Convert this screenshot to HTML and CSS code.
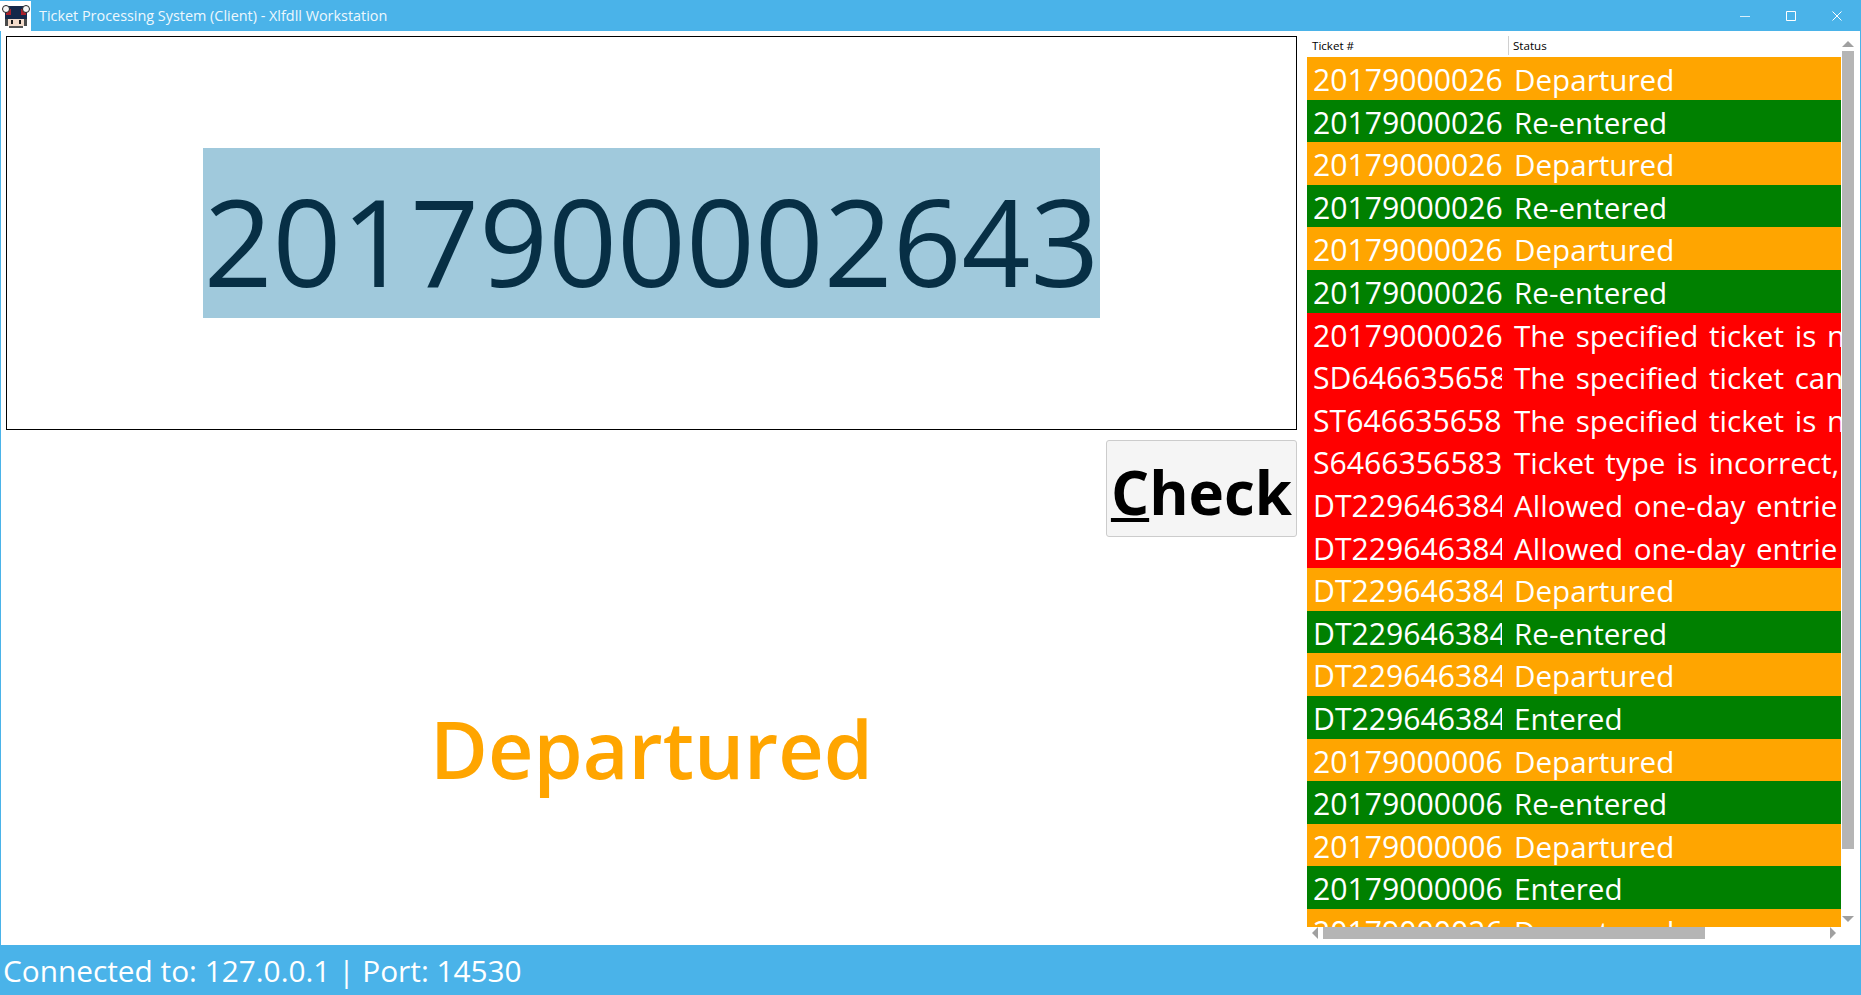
FILE: index.html
```html
<!DOCTYPE html>
<html lang="en">
<head>
    <meta charset="UTF-8">
    <title>Ticket Processing System (Client) - Xlfdll Workstation</title>
    <link rel="stylesheet" href="styles.css">
</head>
<body>
<div class="window">
    <header class="titlebar">
        <div class="app-icon">
            <svg width="30" height="30" viewBox="0 0 30 30">
                <rect x="7" y="5" width="16" height="13" fill="#14284a"/>
                <rect x="4" y="11" width="22" height="7" fill="#14284a"/>
                <rect x="5" y="8" width="5" height="6" fill="#a81f2a"/>
                <rect x="20" y="8" width="5" height="6" fill="#a81f2a"/>
                <circle cx="5" cy="8" r="3.5" fill="#f6f6f6" stroke="#222"/>
                <circle cx="25" cy="8" r="3.5" fill="#f6f6f6" stroke="#222"/>
                <rect x="6" y="18" width="18" height="7" fill="#f4dccb"/>
                <rect x="4" y="18" width="3" height="7" fill="#4a4a4a"/>
                <rect x="23" y="18" width="3" height="7" fill="#4a4a4a"/>
                <rect x="10" y="19" width="2" height="4" fill="#1a1a1a"/>
                <rect x="18" y="19" width="2" height="4" fill="#1a1a1a"/>
                <rect x="8" y="25" width="14" height="2" fill="#555"/>
            </svg>
        </div>
        <span class="app-title">Ticket Processing System (Client) - Xlfdll Workstation</span>
        <div class="window-buttons">
            <svg width="10" height="10" viewBox="0 0 10 10"><path d="M0 5.5H10" stroke="#d8effb" fill="none"/></svg>
            <svg width="10" height="10" viewBox="0 0 10 10"><path d="M.5 .5H9.5V9.5H.5V.5Z" stroke="#fff" fill="none"/></svg>
            <svg width="10" height="10" viewBox="0 0 10 10"><path d="M.5 .5L9.5 9.5M9.5 .5L.5 9.5" stroke="#fff" fill="none"/></svg>
        </div>
    </header>

    <main class="content">
        <section class="check-panel">
            <div class="ticket-box">
                <span class="ticket-number">2017900002643</span>
            </div>
            <div class="check-row">
                <button class="check-button"><u>C</u>heck</button>
            </div>
            <div class="result">Departured</div>
        </section>

        <section class="history">
            <div class="history-body">
                <div class="history-list">
                    <div class="history-head">
                        <div class="head-ticket">Ticket #</div>
                        <div class="head-status">Status</div>
                    </div>
                    <div class="rows">
                        <div class="row orange"><span class="cell-ticket">20179000026</span><span class="cell-status">Departured</span></div>
                        <div class="row green"><span class="cell-ticket">20179000026</span><span class="cell-status">Re-entered</span></div>
                        <div class="row orange"><span class="cell-ticket">20179000026</span><span class="cell-status">Departured</span></div>
                        <div class="row green"><span class="cell-ticket">20179000026</span><span class="cell-status">Re-entered</span></div>
                        <div class="row orange"><span class="cell-ticket">20179000026</span><span class="cell-status">Departured</span></div>
                        <div class="row green"><span class="cell-ticket">20179000026</span><span class="cell-status">Re-entered</span></div>
                        <div class="row red"><span class="cell-ticket">20179000026</span><span class="cell-status">The specified ticket is n</span></div>
                        <div class="row red"><span class="cell-ticket">SD646635658</span><span class="cell-status">The specified ticket can</span></div>
                        <div class="row red"><span class="cell-ticket">ST646635658</span><span class="cell-status">The specified ticket is n</span></div>
                        <div class="row red"><span class="cell-ticket">S6466356583</span><span class="cell-status">Ticket type is incorrect,</span></div>
                        <div class="row red"><span class="cell-ticket">DT229646384</span><span class="cell-status">Allowed one-day entrie</span></div>
                        <div class="row red"><span class="cell-ticket">DT229646384</span><span class="cell-status">Allowed one-day entrie</span></div>
                        <div class="row orange"><span class="cell-ticket">DT229646384</span><span class="cell-status">Departured</span></div>
                        <div class="row green"><span class="cell-ticket">DT229646384</span><span class="cell-status">Re-entered</span></div>
                        <div class="row orange"><span class="cell-ticket">DT229646384</span><span class="cell-status">Departured</span></div>
                        <div class="row green"><span class="cell-ticket">DT229646384</span><span class="cell-status">Entered</span></div>
                        <div class="row orange"><span class="cell-ticket">20179000006</span><span class="cell-status">Departured</span></div>
                        <div class="row green"><span class="cell-ticket">20179000006</span><span class="cell-status">Re-entered</span></div>
                        <div class="row orange"><span class="cell-ticket">20179000006</span><span class="cell-status">Departured</span></div>
                        <div class="row green"><span class="cell-ticket">20179000006</span><span class="cell-status">Entered</span></div>
                        <div class="row orange"><span class="cell-ticket">20179000026</span><span class="cell-status">Departured</span></div>
                    </div>
                </div>
                <div class="vscroll">
                    <div class="arrow-up"></div>
                    <div class="vthumb"></div>
                    <div class="arrow-down"></div>
                </div>
            </div>
            <div class="hscroll">
                <div class="arrow-left"></div>
                <div class="hthumb"></div>
                <div class="arrow-right"></div>
            </div>
        </section>
    </main>

    <footer class="statusbar">Connected to: 127.0.0.1 | Port: 14530</footer>
</div>
</body>
</html>
```

FILE: styles.css
```css
html, body {
    margin: 0;
    height: 100%;
    overflow: hidden;
}
body {
    font-family: "Open Sans", "Noto Sans", sans-serif;
    background-color: #fff;
}
.window {
    display: flex;
    flex-direction: column;
    width: 1861px;
    height: 995px;
}

/* Title bar */
.titlebar {
    display: flex;
    align-items: center;
    flex: 0 0 31px;
    background-color: #4ab3e9;
    color: #fff;
}
.app-icon {
    display: flex;
    align-items: center;
    justify-content: center;
    width: 31px;
    height: 30px;
    margin-top: 1px;
    background-color: #fff;
}
.app-title {
    margin-left: 8px;
    padding-top: 1px;
    font-size: 14.4px;
    line-height: 30px;
    color: #eef8fd;
}
.window-buttons {
    display: flex;
    gap: 36px;
    margin-left: auto;
    margin-right: 19px;
    margin-top: 1px;
}
.window-buttons svg {
    display: block;
}

/* Main area */
.content {
    display: flex;
    flex: 1;
    min-height: 0;
    border-left: 1px solid #4ab3e9;
    border-right: 1px solid #4ab3e9;
}
.check-panel {
    display: flex;
    flex-direction: column;
    flex: 0 0 1291px;
    margin: 5px 0 0 5px;
}
.ticket-box {
    display: flex;
    align-items: center;
    justify-content: center;
    height: 394px;
    box-sizing: border-box;
    border: 1px solid #000;
}
.ticket-number {
    display: block;
    width: 897px;
    height: 170px;
    background-color: #a0c9dc;
    color: #072f45;
    font-size: 120.5px;
    line-height: 184px;
    text-align: center;
    white-space: nowrap;
}
.check-row {
    display: flex;
    justify-content: flex-end;
    margin-top: 10px;
}
.check-button {
    width: 191px;
    height: 97px;
    padding: 7px 0 0;
    background-color: #f5f5f5;
    border: 1px solid #ccc;
    border-radius: 3px;
    font-family: inherit;
    font-size: 60px;
    font-weight: 700;
    line-height: 84px;
    color: #000;
}
.check-button u {
    text-decoration-thickness: 4px;
    text-underline-offset: 3px;
}
.result {
    flex: 1;
    display: flex;
    align-items: center;
    justify-content: center;
    padding-top: 14px;
    font-size: 79px;
    font-weight: 600;
    color: #ffa500;
}

/* History list */
.history {
    display: flex;
    flex-direction: column;
    flex: 1;
    min-width: 0;
    margin: 5px 0 6px 10px;
}
.history-body {
    display: flex;
    flex: 1;
    min-height: 0;
}
.history-list {
    display: flex;
    flex-direction: column;
    flex: 0 0 534px;
    min-width: 0;
}
.history-head {
    display: flex;
    flex: 0 0 21px;
    font-size: 11.6px;
    line-height: 20px;
    color: #000;
}
.head-ticket {
    width: 202px;
    padding-left: 5px;
    box-sizing: border-box;
    border-right: 1px solid #d0d0d0;
    height: 19px;
}
.head-status {
    padding-left: 4px;
}
.rows {
    flex: 1;
    overflow: hidden;
}
.row {
    display: flex;
    height: 42.6px;
    font-size: 29.6px;
    line-height: 45px;
    color: #fff;
    white-space: nowrap;
    overflow: hidden;
}
.orange {
    background-color: #ffa500;
}
.green {
    background-color: #008000;
}
.red {
    background-color: #ff0000;
}
.cell-ticket {
    flex: 0 0 189px;
    margin: 0 12px 0 6px;
    font-size: 30.2px;
    overflow: hidden;
}
.cell-status {
    word-spacing: 3px;
}

/* Fake scrollbars */
.vscroll {
    display: flex;
    flex-direction: column;
    align-items: center;
    width: 12px;
    margin-left: 1px;
}
.vthumb {
    width: 12px;
    height: 798px;
    margin-top: 4px;
    background-color: #b5b5b5;
}
.arrow-up {
    width: 0;
    height: 0;
    margin-top: 5px;
    border-left: 6px solid transparent;
    border-right: 6px solid transparent;
    border-bottom: 6px solid #a0a0a0;
}
.arrow-down {
    width: 0;
    height: 0;
    margin-top: auto;
    margin-bottom: 5px;
    border-left: 6px solid transparent;
    border-right: 6px solid transparent;
    border-top: 6px solid #a0a0a0;
}
.hscroll {
    display: flex;
    align-items: center;
    flex: 0 0 12px;
    width: 534px;
}
.hthumb {
    width: 382px;
    height: 12px;
    margin-left: 5px;
    background-color: #b5b5b5;
}
.arrow-left {
    width: 0;
    height: 0;
    margin-left: 5px;
    border-top: 6px solid transparent;
    border-bottom: 6px solid transparent;
    border-right: 6px solid #a0a0a0;
}
.arrow-right {
    width: 0;
    height: 0;
    margin-left: auto;
    margin-right: 5px;
    border-top: 6px solid transparent;
    border-bottom: 6px solid transparent;
    border-left: 6px solid #a0a0a0;
}

/* Status bar */
.statusbar {
    flex: 0 0 50px;
    box-sizing: border-box;
    padding: 2px 0 0 3px;
    background-color: #4ab3e9;
    color: #fff;
    font-size: 29.8px;
    line-height: 48px;
    white-space: nowrap;
}
```
